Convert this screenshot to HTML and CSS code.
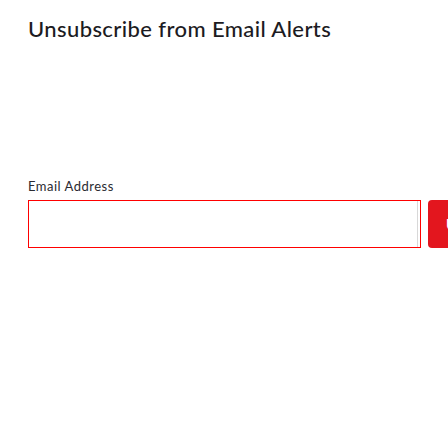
FILE: index.html
```html
<!DOCTYPE html>
<html>
<head>
<meta charset="utf-8">
<link rel="stylesheet" href="styles.css">
</head>
<body>
<main class="page">
  <h1 class="title">Unsubscribe from Email Alerts</h1>
  <form class="form">
    <label class="label" for="email">Email Address</label>
    <div class="row">
      <input class="input" id="email" type="email">
      <button class="btn" type="button">Unsubscribe</button>
    </div>
  </form>
</main>
</body>
</html>
```

FILE: styles.css
```css
html, body {
  margin: 0;
  padding: 0;
  background: #ffffff;
  overflow: hidden;
}
.page {
  padding: 14px 0 0 28px;
  font-family: "Lato", "Liberation Sans", sans-serif;
  color: #1c1b22;
}
.title {
  margin: 0;
  font-size: 22px;
  font-weight: 500;
  line-height: 30px;
  letter-spacing: 0.4px;
}
.form {
  margin-top: 134px;
}
.label {
  display: block;
  font-size: 13px;
  line-height: 16px;
  color: #2a2a30;
  letter-spacing: 0.5px;
  margin-bottom: 6px;
}
.row {
  display: flex;
  gap: 7px;
  width: 600px;
}
.input {
  box-sizing: border-box;
  width: 393px;
  height: 48px;
  border: 1px solid #ff0000;
  border-radius: 0;
  box-shadow: inset -2px 0 0 #ffffff, inset -3px 0 0 #d8d8d8;
  margin: 0;
  padding: 0 12px;
  font: inherit;
  flex: none;
}
.btn {
  box-sizing: border-box;
  height: 48px;
  flex: none;
  margin: 0;
  padding: 0 18px;
  border: none;
  border-radius: 4px;
  background: #e3161e;
  color: #ffffff;
  font-family: "Lato", "Liberation Sans", sans-serif;
  font-size: 15px;
  font-weight: 700;
}
```
